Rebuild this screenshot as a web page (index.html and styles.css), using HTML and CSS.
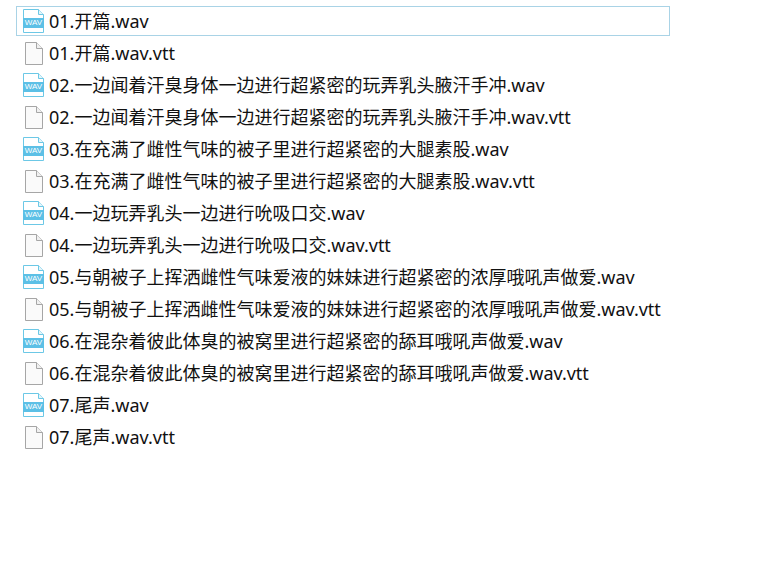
FILE: index.html
```html
<!DOCTYPE html>
<html lang="zh-CN">
<head>
  <meta charset="UTF-8" />
  <title>文件列表</title>
  <link rel="stylesheet" href="styles.css">
</head>
<body>
  <svg class="defs" width="0" height="0">
    <symbol id="wavIcon" viewBox="0 0 24 26">
      <path d="M1.500 1.500H16.500L21.500 6.500V24.500H1.500Z" fill="#fff" stroke="#6cc8e6"/>
      <path d="M16.500 1.500V6.500H21.500" fill="#e4f5fb" stroke="#6cc8e6"/>
      <rect x="1" y="10" width="21" height="10" fill="#5cc0e6"/>
    </symbol>
    <symbol id="txtIcon" viewBox="0 0 24 26">
      <path d="M3.500 2.500H14.500L20.500 8.500V24.500H3.500Z" fill="#fafafa" stroke="#a6a6a6"/>
      <path d="M14.500 2.500V8.500H20.500" fill="#f0f0f0" stroke="#a6a6a6"/>
    </symbol>
  </svg>
  <ul class="file-list">
    <li class="file selected"><span class="icon"><svg><use href="#wavIcon"/></svg><span class="wav-label">WAV</span></span><span class="name">01.开篇.wav</span></li>
    <li class="file"><span class="icon"><svg><use href="#txtIcon"/></svg></span><span class="name">01.开篇.wav.vtt</span></li>
    <li class="file"><span class="icon"><svg><use href="#wavIcon"/></svg><span class="wav-label">WAV</span></span><span class="name">02.一边闻着汗臭身体一边进行超紧密的玩弄乳头腋汗手冲.wav</span></li>
    <li class="file"><span class="icon"><svg><use href="#txtIcon"/></svg></span><span class="name">02.一边闻着汗臭身体一边进行超紧密的玩弄乳头腋汗手冲.wav.vtt</span></li>
    <li class="file"><span class="icon"><svg><use href="#wavIcon"/></svg><span class="wav-label">WAV</span></span><span class="name">03.在充满了雌性气味的被子里进行超紧密的大腿素股.wav</span></li>
    <li class="file"><span class="icon"><svg><use href="#txtIcon"/></svg></span><span class="name">03.在充满了雌性气味的被子里进行超紧密的大腿素股.wav.vtt</span></li>
    <li class="file"><span class="icon"><svg><use href="#wavIcon"/></svg><span class="wav-label">WAV</span></span><span class="name">04.一边玩弄乳头一边进行吮吸口交.wav</span></li>
    <li class="file"><span class="icon"><svg><use href="#txtIcon"/></svg></span><span class="name">04.一边玩弄乳头一边进行吮吸口交.wav.vtt</span></li>
    <li class="file"><span class="icon"><svg><use href="#wavIcon"/></svg><span class="wav-label">WAV</span></span><span class="name">05.与朝被子上挥洒雌性气味爱液的妹妹进行超紧密的浓厚哦吼声做爱.wav</span></li>
    <li class="file"><span class="icon"><svg><use href="#txtIcon"/></svg></span><span class="name">05.与朝被子上挥洒雌性气味爱液的妹妹进行超紧密的浓厚哦吼声做爱.wav.vtt</span></li>
    <li class="file"><span class="icon"><svg><use href="#wavIcon"/></svg><span class="wav-label">WAV</span></span><span class="name">06.在混杂着彼此体臭的被窝里进行超紧密的舔耳哦吼声做爱.wav</span></li>
    <li class="file"><span class="icon"><svg><use href="#txtIcon"/></svg></span><span class="name">06.在混杂着彼此体臭的被窝里进行超紧密的舔耳哦吼声做爱.wav.vtt</span></li>
    <li class="file"><span class="icon"><svg><use href="#wavIcon"/></svg><span class="wav-label">WAV</span></span><span class="name">07.尾声.wav</span></li>
    <li class="file"><span class="icon"><svg><use href="#txtIcon"/></svg></span><span class="name">07.尾声.wav.vtt</span></li>
  </ul>
</body>
</html>
```

FILE: styles.css
```css
body {
  margin: 0;
  background: #fff;
  color: #111;
  font-family: "Noto Sans", "Noto Sans CJK SC", sans-serif;
  font-size: 18px;
}
.defs { display: block; height: 0; }
.file-list {
  list-style: none;
  margin: 0;
  padding: 6px 0 0 16px;
  width: 654px;
  display: flex;
  flex-direction: column;
  gap: 2px;
}
.file {
  height: 30px;
  box-sizing: border-box;
  display: flex;
  align-items: center;
  gap: 3px;
  padding-left: 5px;
  border: 1px solid transparent;
  white-space: nowrap;
}
.selected { border-color: #a9d3e6; }
.icon {
  position: relative;
  width: 24px;
  height: 26px;
  flex: none;
}
.icon svg { width: 24px; height: 26px; display: block; }
.wav-label {
  position: absolute;
  left: 1px;
  top: 10px;
  width: 21px;
  height: 10px;
  line-height: 10px;
  text-align: center;
  color: #fff;
  font-size: 8px;
  font-family: "Liberation Sans", sans-serif;
}
.name { line-height: 28px; }
```
